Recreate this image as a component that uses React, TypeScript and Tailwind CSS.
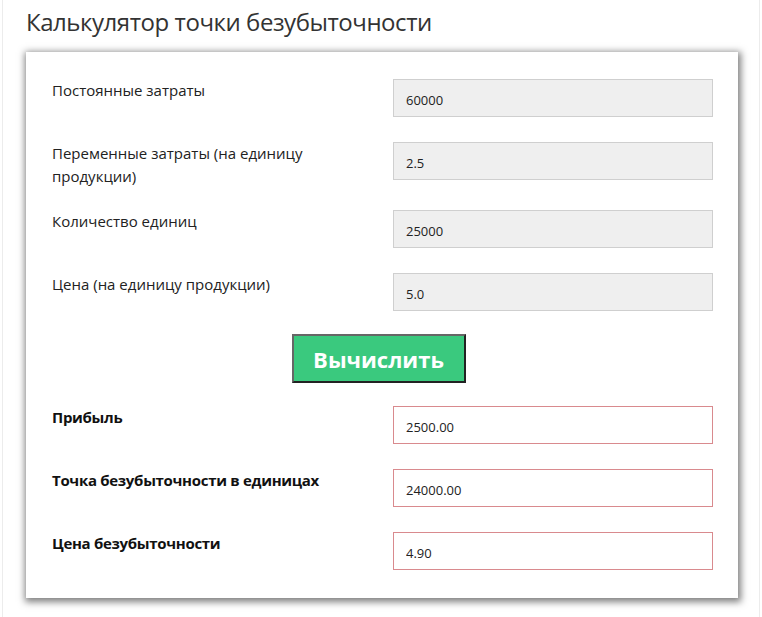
import React from "react";

const inputs = [
  { label: "Постоянные затраты", value: "60000", mb: "mb-[25px]" },
  { label: "Переменные затраты (на единицу продукции)", value: "2.5", mb: "mb-[22px]" },
  { label: "Количество единиц", value: "25000", mb: "mb-[25px]" },
  { label: "Цена (на единицу продукции)", value: "5.0", mb: "mb-0" },
];

const results = [
  { label: "Прибыль", value: "2500.00" },
  { label: "Точка безубыточности в единицах", value: "24000.00" },
  { label: "Цена безубыточности", value: "4.90" },
];

export default function App() {
  return (
    <div className="min-h-[617px] bg-white px-[2px] font-['Open_Sans',sans-serif]">
      <div className="min-h-[617px] border-x border-[#ececec] pl-[23px] pr-[21px]">
        <h1 className="pt-[6px] text-[24px] leading-[32px] text-[#333] font-normal tracking-[-0.45px]">
          Калькулятор точки безубыточности
        </h1>
        <div className="mt-[14px] bg-white pl-[26px] pr-[25px] pt-[27px] pb-[28px] shadow-[1px_2px_7px_2px_rgba(0,0,0,0.5)]">
          {inputs.map((r) => (
            <div key={r.label} className={`flex items-start ${r.mb}`}>
              <label className="w-[275px] text-[15px] leading-[23px] text-[#222]">{r.label}</label>
              <input
                readOnly
                value={r.value}
                className="ml-auto h-[38px] w-[320px] border border-[#cfcfcf] bg-[#efefef] pl-[12px] pt-[4px] text-[13px] text-[#222] outline-none"
              />
            </div>
          ))}
          <div className="flex justify-center my-[23px]">
            <button className="ml-[-8px] h-[49px] w-[174px] border-2 border-t-[#666] border-l-[#666] border-b-[#222] border-r-[#222] bg-[#3ac97e] pt-[2px] text-[22px] font-bold text-white">
              Вычислить
            </button>
          </div>
          {results.map((r, i) => (
            <div key={r.label} className={`flex items-start ${i < results.length - 1 ? "mb-[25px]" : ""}`}>
              <label className="w-[330px] text-[15px] leading-[23px] font-bold tracking-[-0.3px] text-[#111]">{r.label}</label>
              <input
                readOnly
                value={r.value}
                className="ml-auto h-[38px] w-[320px] border border-[#d98a8e] bg-white pl-[12px] pt-[4px] text-[13px] text-[#222] outline-none"
              />
            </div>
          ))}
        </div>
      </div>
    </div>
  );
}
